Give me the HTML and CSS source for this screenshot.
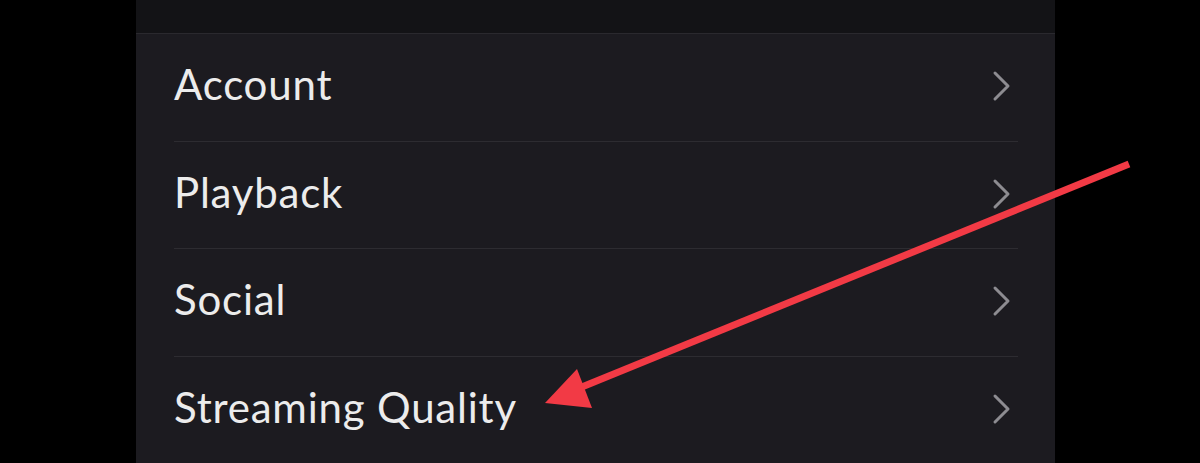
FILE: index.html
```html
<!DOCTYPE html>
<html>
<head>
<meta charset="utf-8">
<link rel="stylesheet" href="styles.css">
</head>
<body>
<div class="screen">
  <div class="panel">
    <div class="header"></div>
    <div class="list">
      <div class="row"><span class="label">Account</span><svg class="chev" viewBox="0 0 20 32"><path d="M3 3 L16 16 L3 29"/></svg></div>
      <div class="row"><span class="label">Playback</span><svg class="chev" viewBox="0 0 20 32"><path d="M3 3 L16 16 L3 29"/></svg></div>
      <div class="row"><span class="label">Social</span><svg class="chev" viewBox="0 0 20 32"><path d="M3 3 L16 16 L3 29"/></svg></div>
      <div class="row"><span class="label">Streaming Quality</span><svg class="chev" viewBox="0 0 20 32"><path d="M3 3 L16 16 L3 29"/></svg></div>
    </div>
  </div>
  <svg class="arrow" viewBox="0 0 1200 463" width="1200" height="463">
    <line x1="1129" y1="164" x2="572" y2="391"/>
    <polygon points="545,403 577,369 592,408"/>
  </svg>
</div>
</body>
</html>
```

FILE: styles.css
```css
html, body {
  margin: 0;
  padding: 0;
  background: #000;
}
.screen {
  position: relative;
  width: 1200px;
  height: 463px;
  overflow: hidden;
  background: #000;
}
.panel {
  margin-left: 136px;
  width: 919px;
  height: 463px;
  background: #1c1b20;
}
.header {
  height: 33px;
  background: #131316;
  border-bottom: 1px solid #2a292e;
}
.list {
  padding: 0 37px 0 38px;
}
.row {
  height: 106.5px;
  display: flex;
  align-items: center;
  justify-content: space-between;
  border-bottom: 1px solid #2d2c31;
}
.label {
  font-family: Lato, "Open Sans", sans-serif;
  font-size: 42px;
  color: #ececec;
  letter-spacing: 0.8px;
  margin-top: -6px;
}
.chev {
  width: 20px;
  height: 32px;
  margin-right: 6px;
  margin-top: -2px;
}
.chev path {
  fill: none;
  stroke: #8d8c91;
  stroke-width: 3;
  stroke-linecap: round;
  stroke-linejoin: round;
}
.arrow {
  position: absolute;
  left: 0;
  top: 0;
}
.arrow line {
  stroke: #f23a45;
  stroke-width: 7;
}
.arrow polygon {
  fill: #f23a45;
}
```
